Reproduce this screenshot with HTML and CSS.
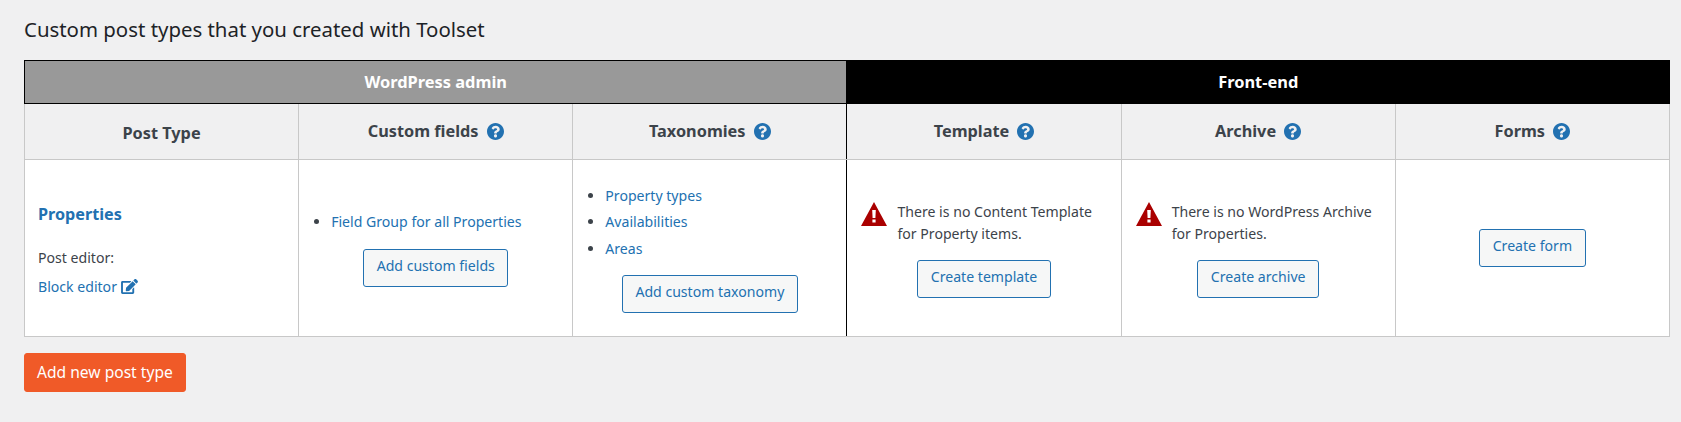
FILE: index.html
```html
<!DOCTYPE html>
<html lang="en">
<head>
<meta charset="utf-8">
<title>Custom post types</title>
<link rel="stylesheet" href="styles.css">
</head>
<body>
<svg class="defs" width="0" height="0" aria-hidden="true">
  <symbol id="help" viewBox="8 8 496 496"><path d="M504 256c0 136.997-111.043 248-248 248S8 392.997 8 256C8 119.083 119.043 8 256 8s248 111.083 248 248zM262.655 90c-54.497 0-89.255 22.957-116.549 63.758-3.536 5.286-2.353 12.415 2.715 16.258l34.699 26.31c5.205 3.947 12.621 3.008 16.665-2.122 17.864-22.658 30.113-35.797 57.303-35.797 20.429 0 45.698 13.148 45.698 32.958 0 14.976-12.363 22.667-32.534 33.976C247.128 238.528 216 254.941 216 296v4c0 6.627 5.373 12 12 12h56c6.627 0 12-5.373 12-12v-1.333c0-28.462 83.186-29.647 83.186-106.667 0-58.002-60.165-102-116.531-102zM256 338c-25.365 0-46 20.635-46 46 0 25.364 20.635 46 46 46s46-20.636 46-46c0-25.365-20.635-46-46-46z"/></symbol>
  <symbol id="warn" viewBox="0 0 26 24"><path fill-rule="evenodd" d="M13 0L26 24H0ZM11.2 8L11.6 16H14.4L14.8 8ZM11.4 17.4V20.6H14.6V17.4Z"/></symbol>
</svg>
<h2 class="title">Custom post types that you created with Toolset</h2>
<table class="types">
  <thead>
    <tr class="groups">
      <th colspan="3" class="group-admin">WordPress admin</th>
      <th colspan="3" class="group-front">Front-end</th>
    </tr>
    <tr class="heads">
      <th class="head-first">Post Type</th>
      <th>Custom fields <svg class="help"><use href="#help"/></svg></th>
      <th class="pre-split">Taxonomies <svg class="help"><use href="#help"/></svg></th>
      <th class="split">Template <svg class="help"><use href="#help"/></svg></th>
      <th>Archive <svg class="help"><use href="#help"/></svg></th>
      <th>Forms <svg class="help"><use href="#help"/></svg></th>
    </tr>
  </thead>
  <tbody>
    <tr>
      <td class="cell-first">
        <a class="type-name" href="#">Properties</a>
        <p class="editor-label">Post editor:</p>
        <p class="editor-link"><a href="#">Block editor <svg class="edit" viewBox="0 0 576 512"><path d="M402.6 83.2l90.2 90.2c3.8 3.8 3.8 10 0 13.8L274.4 405.6l-92.8 10.3c-12.4 1.4-22.9-9.1-21.5-21.5l10.3-92.8L388.8 83.2c3.8-3.8 10-3.8 13.8 0zm162-22.9l-48.8-48.8c-15.2-15.2-39.9-15.2-55.2 0l-35.4 35.4c-3.8 3.8-3.8 10 0 13.8l90.2 90.2c3.8 3.8 10 3.8 13.8 0l35.4-35.4c15.2-15.3 15.2-40 0-55.2zM384 346.2V448H64V128h229.8c3.2 0 6.2-1.3 8.5-3.5l40-40c7.6-7.6 2.2-20.5-8.5-20.5H48C21.5 64 0 85.5 0 112v352c0 26.5 21.5 48 48 48h352c26.5 0 48-21.5 48-48V306.2c0-10.7-12.9-16-20.5-8.5l-40 40c-2.2 2.3-3.5 5.3-3.5 8.5z"/></svg></a></p>
      </td>
      <td class="cell-list">
        <ul class="links"><li><a href="#">Field Group for all Properties</a></li></ul>
        <div class="action"><a class="btn" href="#">Add custom fields</a></div>
      </td>
      <td class="cell-list pre-split">
        <ul class="links">
          <li><a href="#">Property types</a></li>
          <li><a href="#">Availabilities</a></li>
          <li><a href="#">Areas</a></li>
        </ul>
        <div class="action"><a class="btn" href="#">Add custom taxonomy</a></div>
      </td>
      <td class="split cell-notice">
        <div class="notice"><svg class="warn"><use href="#warn"/></svg><span>There is no Content Template for Property items.</span></div>
        <div class="action"><a class="btn" href="#">Create template</a></div>
      </td>
      <td class="cell-notice">
        <div class="notice"><svg class="warn"><use href="#warn"/></svg><span>There is no WordPress Archive for Properties.</span></div>
        <div class="action"><a class="btn" href="#">Create archive</a></div>
      </td>
      <td>
        <div class="action only"><a class="btn" href="#">Create form</a></div>
      </td>
    </tr>
  </tbody>
</table>
<a class="btn-primary" href="#">Add new post type</a>
</body>
</html>
```

FILE: styles.css
```css
* { box-sizing: border-box; }
html, body { margin: 0; height: 100%; }
body {
  background: #f0f0f1;
  padding: 0 11px 0 24px;
  font-family: "Noto Sans", "Open Sans", sans-serif;
  font-size: 14.1px;
  line-height: 1.4;
  color: #3c434a;
  overflow: hidden;
}
a { color: #2271b1; text-decoration: none; }
.defs { position: absolute; }
.title {
  margin: 0;
  padding-top: 15px;
  height: 60px;
  font-size: 20.4px;
  line-height: 28px;
  font-weight: 400;
  color: #1d2327;
}
.types {
  width: 100%;
  table-layout: fixed;
  border-collapse: collapse;
  background: #fff;
}
.types th, .types td { border: 1px solid #c8c8c8; text-align: center; }
.types .groups th {
  height: 43px;
  color: #fff;
  font-size: 16.4px;
  font-weight: 700;
  border: 1px solid #000;
}
.group-admin { background: #999; }
.group-front { background: #000; }
.heads th {
  height: 56px;
  background: #f0f0f1;
  font-size: 16.3px;
  font-weight: 700;
}
.heads .head-first { padding-top: 4px; }
.types .split { border-left: 1px solid #000; }
.types .pre-split { border-right: 1px solid #000; }
.types td { height: 177px; padding: 10px 14px; vertical-align: middle; text-align: left; }
.types .cell-first { padding: 14px 14px 10px 13px; }
.types .cell-list { padding-top: 14px; }
.types .cell-notice { padding-top: 12px; }
.help { width: 17px; height: 17px; fill: #2271b1; vertical-align: -3px; margin-left: 4px; }
.type-name { font-size: 16.2px; font-weight: 700; }
.editor-label { margin: 22px 0 9px; }
.editor-link { margin: 0; }
.edit { width: 17px; height: 15px; fill: #2271b1; vertical-align: -2px; }
.links { margin: 0 0 17px; padding-left: 18px; }
.links li { margin-bottom: 8px; line-height: 18.5px; }
.action { text-align: center; }
.btn {
  display: inline-block;
  height: 38px;
  padding: 0 12.5px;
  line-height: 32px;
  border: 1px solid #2271b1;
  border-radius: 3px;
  background: #f6f7f7;
}
.notice { display: flex; align-items: flex-start; gap: 10px; margin: 0 0 14px; line-height: 22.5px; }
.warn { flex: none; width: 26px; height: 24px; fill: #a00; margin-top: 1px; }
.btn-primary {
  display: inline-block;
  margin-top: 16px;
  height: 39px;
  padding: 0 12px;
  line-height: 37px;
  border-radius: 3px;
  border: 1px solid #f05a28;
  background: #f05a28;
  color: #fff;
  font-size: 15.6px;
}
```
